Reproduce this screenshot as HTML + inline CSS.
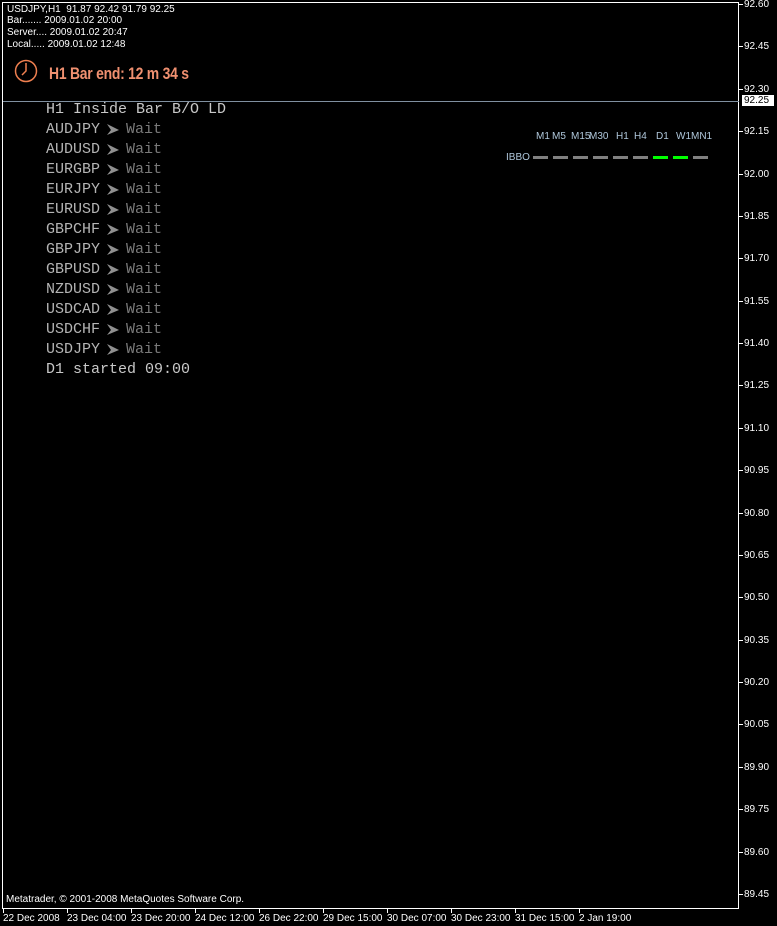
<!DOCTYPE html>
<html><head><meta charset="utf-8"><style>
body{margin:0;width:777px;height:926px;background:#000;overflow:hidden;position:relative;font-family:"Liberation Sans",sans-serif;}
.a{position:absolute;white-space:nowrap;}
.s{font-size:10px;color:#fff;}
.m{font-family:"Liberation Mono",monospace;font-size:15px;color:#b4b4b4;}
.w{color:#7a7a7a;}
.p{position:absolute;left:744px;font-size:10px;color:#fff;line-height:12px;}
.pt{position:absolute;left:739px;width:4px;height:1px;background:#fff;}
.t{position:absolute;top:913px;font-size:10px;color:#fff;}
.tt{position:absolute;top:909px;width:1px;height:4px;background:#fff;}
.tf{position:absolute;top:131px;font-size:10px;color:#b0c8dc;}
.bar{position:absolute;top:156px;width:15px;height:3px;background:#808080;}
</style></head><body>
<div class="a" style="left:2px;top:2px;width:737px;height:907px;border:1px solid #fff;box-sizing:border-box;"></div>
<div class="a" style="left:3px;top:101px;width:736px;height:1px;background:#8090a0;"></div>
<div class="a s" style="left:7px;top:4px;">USDJPY,H1&nbsp; 91.87 92.42 91.79 92.25</div>
<div class="a s" style="left:7px;top:15px;">Bar....... 2009.01.02 20:00</div>
<div class="a s" style="left:7px;top:27px;">Server.... 2009.01.02 20:47</div>
<div class="a s" style="left:7px;top:39px;">Local..... 2009.01.02 12:48</div>
<svg class="a" style="left:14px;top:59px" width="26" height="24" viewBox="0 0 26 24"><circle cx="12" cy="12" r="10.5" fill="none" stroke="#f08050" stroke-width="1.5"/><path d="M12 4v8l-4 4" fill="none" stroke="#f08050" stroke-width="1.5"/></svg>
<div class="a" style="left:49px;top:64px;font-size:17px;font-weight:bold;color:#f09070;letter-spacing:-0.3px;transform:scaleX(0.82);transform-origin:left;">H1 Bar end: 12 m 34 s</div>
<div class="a m" style="left:46px;top:101px;color:#c8c8c8">H1 Inside Bar B/O LD</div>
<div id="list"></div>
<div class="a m" style="left:46px;top:361px;color:#c8c8c8">D1 started 09:00</div>
<div class="tf" style="left:536px">M1</div><div class="tf" style="left:552px">M5</div><div class="tf" style="left:571px">M15</div><div class="tf" style="left:589px">M30</div><div class="tf" style="left:616px">H1</div><div class="tf" style="left:634px">H4</div><div class="tf" style="left:656px">D1</div><div class="tf" style="left:676px">W1</div><div class="tf" style="left:691px">MN1</div>
<div class="tf" style="left:506px;top:152px">IBBO</div>
<div class="bar" style="left:533px"></div><div class="bar" style="left:553px"></div><div class="bar" style="left:573px"></div><div class="bar" style="left:593px"></div><div class="bar" style="left:613px"></div><div class="bar" style="left:633px"></div><div class="bar" style="left:653px;background:#00ff00"></div><div class="bar" style="left:673px;background:#00ff00"></div><div class="bar" style="left:693px"></div>
<div class="a" style="left:742px;top:95px;width:30px;height:11px;background:#fff;color:#000;font-size:10px;line-height:11px;padding-left:2px;">92.25</div>
<div class="a s" style="left:6px;top:894px;">Metatrader, © 2001-2008 MetaQuotes Software Corp.</div>
<div id="ax"></div>
<script>
var pairs=["AUDJPY","AUDUSD","EURGBP","EURJPY","EURUSD","GBPCHF","GBPJPY","GBPUSD","NZDUSD","USDCAD","USDCHF","USDJPY"],h="";
pairs.forEach(function(p,i){var y=121+i*20;h+='<div class="a m" style="left:46px;top:'+y+'px">'+p+'</div><svg class="a" style="left:106px;top:'+(y+2)+'px" width="14" height="13"><polygon points="1,1 13,7 1,12 5,7" fill="#909090"/></svg><div class="a m w" style="left:126px;top:'+y+'px">Wait</div>';});
document.getElementById("list").innerHTML=h;
var a="";for(var i=0;i<22;i++){var v=(92.60-i*0.15).toFixed(2),y=Math.round(4+i*42.38);if(v!="92.25")a+='<div class="pt" style="top:'+y+'px"></div><div class="p" style="top:'+(y-5)+'px">'+v+'</div>';}
var ts=["22 Dec 2008","23 Dec 04:00","23 Dec 20:00","24 Dec 12:00","26 Dec 22:00","29 Dec 15:00","30 Dec 07:00","30 Dec 23:00","31 Dec 15:00","2 Jan 19:00"];
ts.forEach(function(t,i){var x=3+i*64;a+='<div class="tt" style="left:'+x+'px"></div><div class="t" style="left:'+x+'px">'+t+'</div>';});
document.getElementById("ax").innerHTML=a;
</script>
</body></html>
